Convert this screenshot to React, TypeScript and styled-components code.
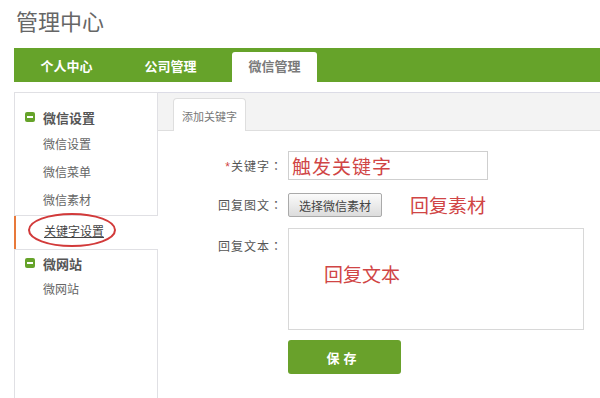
import styled, { createGlobalStyle } from "styled-components";

const GlobalStyle = createGlobalStyle`
  html, body {
    margin: 0;
    padding: 0;
    background: #fff;
    overflow: hidden;
  }
  body {
    font-family: "Liberation Sans", "Noto Sans CJK SC", sans-serif;
  }
`;

const green = "#66a32a";
const red = "#d04545";

const Page = styled.div`
  position: relative;
  width: 600px;
  height: 398px;
`;

const Title = styled.h1`
  margin: 0 0 10px 16px;
  padding-top: 8px;
  font-size: 22px;
  line-height: 30px;
  font-weight: normal;
  color: #666;
`;

const NavBar = styled.div`
  margin-left: 14px;
  height: 34px;
  background: ${green};
  display: flex;
  align-items: flex-end;
  padding-left: 10px;
  gap: 19px;
`;

const NavTab = styled.div<{ $active?: boolean }>`
  width: 85px;
  height: 30px;
  line-height: 30px;
  text-align: center;
  font-size: 13px;
  font-weight: bold;
  border-radius: 3px 3px 0 0;
  color: ${(p) => (p.$active ? "#7a7a7a" : "#fff")};
  background: ${(p) => (p.$active ? "#fff" : "transparent")};
`;

const Main = styled.div`
  margin: 10px 0 0 14px;
  display: flex;
`;

const Sidebar = styled.div`
  width: 144px;
  display: flex;
  flex-direction: column;
`;

const Group = styled.div<{ $fill?: boolean }>`
  border: 1px solid #e0e0e4;
  padding-top: ${(p) => (p.$fill ? "0" : "10px")};
  min-height: ${(p) => (p.$fill ? "160px" : "auto")};
`;

const GroupHead = styled.div<{ $h: number }>`
  height: ${(p) => p.$h}px;
  display: flex;
  align-items: center;
  padding-left: 10px;
  gap: 8px;
  font-size: 13px;
  font-weight: bold;
  color: #555;
`;

const MinusIcon = styled.span`
  width: 10px;
  height: 10px;
  border-radius: 2px;
  background: ${green};
  position: relative;
  &::after {
    content: "";
    position: absolute;
    left: 2px;
    top: 4px;
    width: 6px;
    height: 2px;
    background: #fff;
  }
`;

const SideItem = styled.div`
  height: 28px;
  line-height: 28px;
  padding-left: 28px;
  font-size: 12px;
  color: #666;
`;

const ActiveItem = styled.div`
  height: 33px;
  line-height: 33px;
  padding-left: 28px;
  font-size: 12px;
  color: #444;
  border-left: 2px solid #e8793a;
  text-decoration: underline;
`;

const Content = styled.div`
  flex: 1;
`;

const TabBar = styled.div`
  height: 37px;
  background: #f3f3f3;
  border-top: 1px solid #dcdce6;
  border-bottom: 1px solid #dedede;
  display: flex;
  align-items: flex-end;
  padding-left: 15px;
`;

const SubTab = styled.div`
  width: 71px;
  height: 32px;
  margin-bottom: -1px;
  background: #fff;
  border: 1px solid #dedede;
  border-bottom: none;
  border-radius: 4px 4px 0 0;
  text-align: center;
  line-height: 36px;
  font-size: 11px;
  color: #777;
`;

const Form = styled.div`
  padding-top: 20px;
  display: grid;
  grid-template-columns: 125px 1fr;
  column-gap: 5px;
`;

const Label = styled.div<{ $h: number; $top?: number }>`
  margin-top: ${(p) => p.$top ?? 0}px;
  height: ${(p) => p.$h}px;
  line-height: ${(p) => p.$h}px;
  text-align: right;
  font-size: 12px;
  letter-spacing: 1px;
  color: #555;
  span {
    color: ${red};
  }
  i {
    font-style: normal;
    font-family: "Noto Sans CJK TC", sans-serif;
  }
`;

const Cell = styled.div<{ $h: number; $top?: number }>`
  margin-top: ${(p) => p.$top ?? 0}px;
  height: ${(p) => p.$h}px;
  display: flex;
  align-items: center;
`;

const TextInput = styled.input`
  box-sizing: border-box;
  width: 200px;
  height: 29px;
  border: 1px solid #cfcfcf;
  padding: 0 3px;
  font-family: "Noto Sans CJK SC", sans-serif;
  font-size: 19px;
  letter-spacing: 1px;
  color: ${red};
  outline: none;
`;

const PickButton = styled.button`
  box-sizing: border-box;
  width: 94px;
  height: 24px;
  padding: 0;
  border: 1px solid #aaa;
  border-radius: 2px;
  background: linear-gradient(#fbfbfb, #dcdcdc);
  font-family: "Noto Sans CJK SC", sans-serif;
  font-size: 12px;
  color: #444;
`;

const Note = styled.span`
  margin-left: 28px;
  font-family: "Noto Sans CJK SC", sans-serif;
  font-size: 19px;
  line-height: 24px;
  color: ${red};
`;

const TextBox = styled.div`
  box-sizing: border-box;
  width: 296px;
  height: 102px;
  border: 1px solid #d8d8d8;
  padding: 31px 0 0 35px;
  font-size: 19px;
  color: ${red};
`;

const SaveButton = styled.button`
  width: 113px;
  height: 34px;
  border: none;
  border-radius: 3px;
  background: #69a12b;
  color: #fff;
  font-family: "Noto Sans CJK SC", sans-serif;
  font-size: 13px;
  font-weight: bold;
  letter-spacing: 4px;
  padding-left: 4px;
`;

const Circle = styled.svg`
  position: absolute;
  left: 26px;
  top: 211px;
  overflow: visible;
`;

export default function App() {
  return (
    <Page>
      <GlobalStyle />
      <Title>管理中心</Title>
      <NavBar>
        <NavTab>个人中心</NavTab>
        <NavTab>公司管理</NavTab>
        <NavTab $active>微信管理</NavTab>
      </NavBar>
      <Main>
        <Sidebar>
          <Group>
            <GroupHead $h={28}>
              <MinusIcon />
              微信设置
            </GroupHead>
            <SideItem>微信设置</SideItem>
            <SideItem>微信菜单</SideItem>
            <SideItem>微信素材</SideItem>
          </Group>
          <ActiveItem>关键字设置</ActiveItem>
          <Group $fill>
            <GroupHead $h={26}>
              <MinusIcon />
              微网站
            </GroupHead>
            <SideItem>微网站</SideItem>
          </Group>
        </Sidebar>
        <Content>
          <TabBar>
            <SubTab>添加关键字</SubTab>
          </TabBar>
          <Form>
            <Label $h={29}>
              <span>*</span>关键字<i>：</i>
            </Label>
            <Cell $h={29}>
              <TextInput defaultValue="触发关键字" readOnly />
            </Cell>
            <Label $h={24} $top={13}>
              回复图文<i>：</i>
            </Label>
            <Cell $h={24} $top={13}>
              <PickButton>选择微信素材</PickButton>
              <Note>回复素材</Note>
            </Cell>
            <Label $h={29} $top={14}>
              回复文本<i>：</i>
            </Label>
            <Cell $h={102} $top={11}>
              <TextBox>回复文本</TextBox>
            </Cell>
            <div />
            <Cell $h={34} $top={10}>
              <SaveButton>保存</SaveButton>
            </Cell>
          </Form>
        </Content>
      </Main>
      <Circle width="92" height="38" viewBox="0 0 92 38">
        <ellipse cx="46" cy="19" rx="43" ry="16" fill="none" stroke="#d23a3a" strokeWidth="2" />
      </Circle>
    </Page>
  );
}
